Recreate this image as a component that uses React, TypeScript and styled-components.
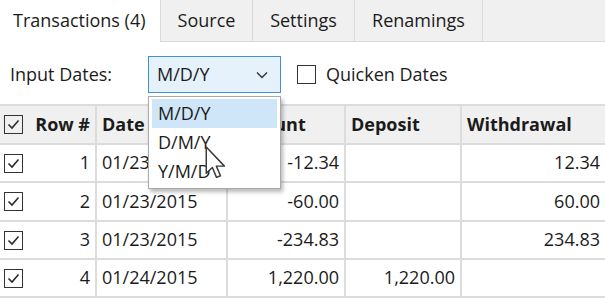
import React from 'react';
import styled, { createGlobalStyle } from 'styled-components';

interface RowData {
  id: number;
  date: string;
  amount: string;
  deposit: string;
  withdrawal: string;
}

const rows: RowData[] = [
  { id: 1, date: '01/23/2015', amount: '-12.34', deposit: '', withdrawal: '12.34' },
  { id: 2, date: '01/23/2015', amount: '-60.00', deposit: '', withdrawal: '60.00' },
  { id: 3, date: '01/23/2015', amount: '-234.83', deposit: '', withdrawal: '234.83' },
  { id: 4, date: '01/24/2015', amount: '1,220.00', deposit: '1,220.00', withdrawal: '' }
];

const tabs = [
  { name: 'Transactions (4)', width: 161, active: true },
  { name: 'Source', width: 92, active: false },
  { name: 'Settings', width: 102, active: false },
  { name: 'Renamings', width: 128, active: false }
];

const formats = ['M/D/Y', 'D/M/Y', 'Y/M/D'];

const GlobalStyle = createGlobalStyle`
  html, body {
    margin: 0;
    padding: 0;
    background: #ffffff;
  }
  body {
    font-family: "Open Sans", "Noto Sans", sans-serif;
    line-height: 1.2;
    color: #1b1b1b;
  }
`;

const CheckBox = ({ checked }: { checked: boolean }) => (
  <CheckBoxStyle>
    {checked && (
      <svg width="13" height="11" viewBox="0 0 13 11">
        <path d="M1.5 5.5 L5 9 L11.5 1.5" fill="none" stroke="#2b2b2b" strokeWidth="1.6" />
      </svg>
    )}
  </CheckBoxStyle>
);

const Cursor = () => (
  <CursorStyle width="22" height="33" viewBox="0 0 13 20">
    <path
      d="M0.6 0.6 L0.6 16.5 L4.3 13 L6.8 19 L9.2 18 L6.7 12.2 L11.6 12.2 Z"
      fill="#ffffff"
      stroke="#3a3a3a"
      strokeWidth="0.9"
      strokeLinejoin="round"
    />
  </CursorStyle>
);

const App = () => (
  <Page>
    <GlobalStyle />
    <TabStrip>
      {tabs.map(t => (
        <Tab key={t.name} $active={t.active} $width={t.width}>{t.name}</Tab>
      ))}
    </TabStrip>
    <Toolbar>
      <Label>Input Dates:</Label>
      <ComboWrap>
        <Combo>
          <span>M/D/Y</span>
          <svg width="12" height="8" viewBox="0 0 12 8">
            <path d="M1 1.5 L6 6.5 L11 1.5" fill="none" stroke="#333" strokeWidth="1.4" />
          </svg>
        </Combo>
        <DropList>
          {formats.map((f, i) => (
            <DropItem key={f} $selected={i === 0}>{f}</DropItem>
          ))}
        </DropList>
        <Cursor />
      </ComboWrap>
      <QuickenBox />
      <QuickenLabel>Quicken Dates</QuickenLabel>
    </Toolbar>
    <Grid>
      <HeadCell $align="space-between">
        <CheckBox checked />
        <span>Row #</span>
      </HeadCell>
      <HeadCell>Date</HeadCell>
      <HeadCell>Amount</HeadCell>
      <HeadCell>Deposit</HeadCell>
      <HeadCell $last>Withdrawal</HeadCell>
      {rows.map(r => (
        <React.Fragment key={r.id}>
          <Cell $align="space-between">
            <CheckBox checked />
            <span>{r.id}</span>
          </Cell>
          <Cell>{r.date}</Cell>
          <Cell $align="flex-end">{r.amount}</Cell>
          <Cell $align="flex-end">{r.deposit}</Cell>
          <Cell $align="flex-end" $last>{r.withdrawal}</Cell>
        </React.Fragment>
      ))}
    </Grid>
  </Page>
);

const Page = styled.div`
  width: 605px;
  height: 300px;
  overflow: hidden;
  position: relative;
  background: #ffffff;
`;

const TabStrip = styled.div`
  display: flex;
  height: 42px;
  box-sizing: border-box;
  background: #f0f0f0;
  border-bottom: 1px solid #d9d9d9;
`;

const Tab = styled.div<{ $active: boolean; $width: number }>`
  width: ${p => p.$width}px;
  height: ${p => (p.$active ? '42px' : '41px')};
  box-sizing: border-box;
  display: flex;
  align-items: center;
  padding-left: ${p => (p.$active ? '13px' : '0')};
  justify-content: ${p => (p.$active ? 'flex-start' : 'center')};
  background: ${p => (p.$active ? '#ffffff' : '#f0f0f0')};
  border-right: 1px solid #d9d9d9;
  font-size: 18px;
`;

const Toolbar = styled.div`
  display: flex;
  align-items: center;
  height: 62px;
  padding: 3px 0 0 10px;
  box-sizing: border-box;
  font-size: 18px;
`;

const Label = styled.div`
  width: 138px;
`;

const ComboWrap = styled.div`
  position: relative;
  width: 133px;
  height: 37px;
`;

const Combo = styled.div`
  display: flex;
  align-items: center;
  justify-content: space-between;
  height: 100%;
  box-sizing: border-box;
  padding: 0 12px 0 8px;
  background: #e5f1fb;
  border: 1px solid #3f8fd9;
`;

const DropList = styled.div`
  position: absolute;
  top: 40px;
  left: 0;
  width: 133px;
  box-sizing: border-box;
  padding: 2px 3px;
  background: #ffffff;
  border: 1px solid #a9a9a9;
  box-shadow: 2px 3px 4px rgba(0, 0, 0, 0.28);
  z-index: 2;
`;

const DropItem = styled.div<{ $selected: boolean }>`
  height: 29px;
  display: flex;
  align-items: center;
  padding-left: 6px;
  background: ${p => (p.$selected ? '#cfe5f8' : 'transparent')};
`;

const CursorStyle = styled.svg`
  position: absolute;
  left: 57px;
  top: 90px;
  z-index: 3;
`;

const QuickenBox = styled.div`
  width: 19px;
  height: 19px;
  box-sizing: border-box;
  border: 1.5px solid #333333;
  margin-left: 16px;
`;

const QuickenLabel = styled.div`
  margin-left: 10px;
`;

const Grid = styled.div`
  display: grid;
  grid-template-columns: 97px 131px 118px 116px 1fr;
  grid-template-rows: 39px 38px 39px 38px 38px;
  border-top: 2px solid #dcdcdc;
  font-size: 18px;
`;

const Cell = styled.div<{ $align?: string; $last?: boolean }>`
  display: flex;
  align-items: center;
  justify-content: ${p => p.$align || 'flex-start'};
  box-sizing: border-box;
  padding: 0 5px 0 5px;
  border-bottom: 2px solid #dcdcdc;
  border-right: ${p => (p.$last ? 'none' : '2px solid #dcdcdc')};
  white-space: nowrap;
  overflow: hidden;
`;

const HeadCell = styled(Cell)`
  background: #f0f0f0;
  font-weight: 700;
`;

const CheckBoxStyle = styled.div`
  width: 19px;
  height: 19px;
  box-sizing: border-box;
  border: 1.5px solid #333333;
  display: flex;
  align-items: center;
  justify-content: center;
  margin-left: -1px;
`;

export default App;
